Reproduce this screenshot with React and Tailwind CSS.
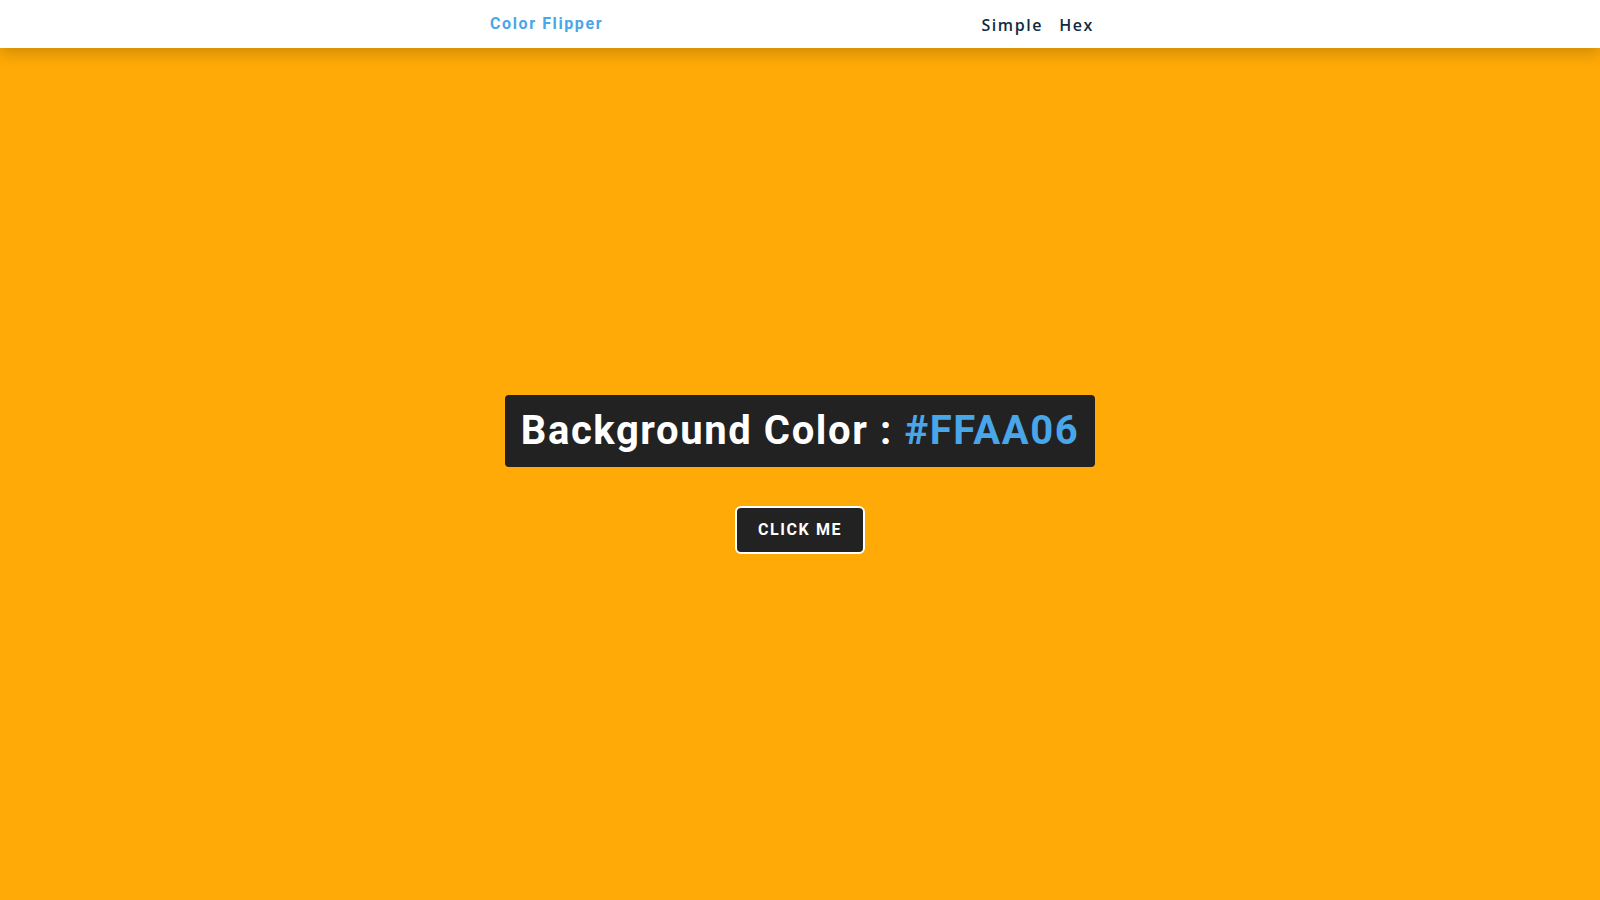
export default function App() {
  const color = "#FFAA06";

  return (
    <div className="flex min-h-screen flex-col bg-[#FFAA06] font-['Roboto',sans-serif]">
      <nav className="relative z-10 h-12 bg-white shadow-[0_5px_15px_rgba(0,0,0,0.2)]">
        <div className="mx-auto flex h-full w-[620px] items-center justify-between">
          <h4 className="text-base font-bold tracking-[0.1rem] text-[#49a6e9]">
            Color Flipper
          </h4>
          <ul className="mr-4 flex gap-4 pt-[2px] font-['Open_Sans',sans-serif] text-base font-semibold tracking-[0.1rem] text-[#102a42]">
            <li>
              <a href="#">Simple</a>
            </li>
            <li>
              <a href="#">Hex</a>
            </li>
          </ul>
        </div>
      </nav>

      <main className="flex flex-1 flex-col items-center justify-center">
        <h2 className="mb-[39px] rounded bg-[#222222] px-4 py-[11px] text-[40px] leading-[1.25] font-bold tracking-[0.1rem] text-white">
          Background Color : <span className="text-[#49a6e9]">{color}</span>
        </h2>
        <button className="rounded-md border-2 border-white bg-[#222222] px-[21px] py-[10px] text-base leading-6 font-bold tracking-[0.1em] text-white uppercase">
          Click me
        </button>
      </main>
    </div>
  );
}
